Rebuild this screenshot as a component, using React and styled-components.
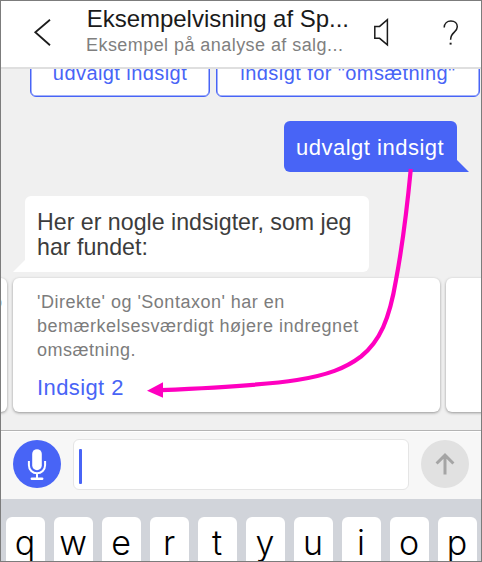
import React from "react";
import styled, { createGlobalStyle } from "styled-components";

const BLUE = "#4864f6";

const GlobalStyle = createGlobalStyle`
  *, *::before, *::after { box-sizing: border-box; }
  body { margin: 0; font-family: "Liberation Sans", Arial, sans-serif; }
`;

const Phone = styled.div`
  position: relative;
  width: 482px;
  height: 562px;
  display: flex;
  flex-direction: column;
  overflow: hidden;
  background: #f0f0f0;
  border: 1px solid #7c7c7c;
`;

const Header = styled.header`
  flex: none;
  height: 68px;
  display: flex;
  align-items: flex-start;
  background: #fff;
  border-bottom: 2px solid #dfdfdf;
`;

const HeaderIcon = styled.svg`
  flex: none;
  display: block;
  width: ${(p) => p.$width}px;
  height: 66px;
  fill: none;
  stroke: #1c1c1c;
`;

const Titles = styled.div`
  width: 286px;
  padding-top: 5px;
  white-space: nowrap;
`;

const Title = styled.h1`
  margin: 0;
  padding-left: 0.7px;
  font-size: 24px;
  font-weight: 400;
  line-height: 26px;
  letter-spacing: -0.02px;
  color: #1a1a1a;
`;

const Subtitle = styled.p`
  margin: 0;
  font-size: 18px;
  line-height: 26px;
  letter-spacing: 0.44px;
  color: #7f7f7f;
`;

const Chat = styled.main`
  flex: none;
  height: 361px;
  display: flex;
  flex-direction: column;
  overflow: hidden;
`;

const Chips = styled.div`
  flex: none;
  display: flex;
  gap: 6px;
  height: 48px;
  margin: -20px 0 0 29px;
`;

const Chip = styled.button`
  flex: none;
  width: ${(p) => p.$width}px;
  padding: 0;
  border: 1px solid ${BLUE};
  border-radius: 6px;
  background: #fff;
  box-shadow: inset 0 0 0 0.5px ${BLUE};
  color: ${BLUE};
  font: 20px/24px "Liberation Sans", Arial, sans-serif;
  letter-spacing: 0.43px;
  white-space: nowrap;
`;

const Sent = styled.div`
  position: relative;
  align-self: flex-end;
  flex: none;
  width: 173px;
  height: 51px;
  margin: 24px 24px 0 0;
  padding: 14px 0 0 12px;
  border-radius: 6px 6px 0 6px;
  background: ${BLUE};
  color: #fff;
  font-size: 22px;
  line-height: 25px;
  letter-spacing: 0.5px;
  white-space: nowrap;
`;

const Received = styled.div`
  position: relative;
  flex: none;
  width: 344px;
  height: 76px;
  margin: 24px 0 0 24px;
  padding: 14px 0 0 12px;
  border-radius: 6px 6px 6px 0;
  background: #fff;
  color: #3c3c3c;
  font-size: 23.2px;
  line-height: 25px;
  white-space: nowrap;
`;

const Tail = styled.svg`
  position: absolute;
  bottom: 0;
  ${(p) => p.$side}: -12px;
  width: 12px;
  height: 12px;
`;

const Cards = styled.div`
  flex: none;
  display: flex;
  gap: 6px;
  margin: 6px 0 0 -40px;
`;

const Card = styled.article`
  flex: none;
  width: ${(p) => p.$width}px;
  height: 134px;
  padding: 12px 0 0 ${(p) => p.$inset ?? 24}px;
  overflow: hidden;
  border-radius: 6px;
  background: #fff;
  box-shadow: 0 1px 3px rgba(0, 0, 0, 0.38);
  color: #7c7c7c;
  font-size: 18px;
  line-height: 24px;
  letter-spacing: 0.5px;
  white-space: nowrap;
`;

const CardText = styled.p`
  margin: 0;
`;

const CardLink = styled.a`
  display: block;
  margin-top: 13px;
  color: ${BLUE};
  font-size: 22px;
  line-height: 25px;
  letter-spacing: 0.4px;
`;

const Composer = styled.section`
  flex: none;
  display: flex;
  align-items: center;
  gap: 12px;
  height: 69px;
  padding: 0 12px 2px;
  border-top: 1px solid #b4b4b4;
  background: #f7f7f7;
  box-shadow: inset 0 1px #fff;
`;

const RoundButton = styled.button`
  flex: none;
  width: 48px;
  height: 48px;
  padding: 0;
  border: 0;
  border-radius: 50%;
  background: ${(p) => (p.$active ? BLUE : "#e1e1e1")};
`;

const ButtonIcon = styled.svg`
  display: block;
  width: 48px;
  height: 48px;
  fill: none;
  stroke: ${(p) => p.$color};
`;

const Input = styled.div`
  flex: none;
  width: 336px;
  height: 51px;
  display: flex;
  align-items: center;
  padding-left: 5px;
  border: 1px solid #e5e5e5;
  border-radius: 6px;
  background: #fff;
`;

const Caret = styled.span`
  width: 3px;
  height: 35px;
  margin-top: 4px;
  border-radius: 1px;
  background: ${BLUE};
`;

const Keyboard = styled.div`
  flex: 1;
  display: flex;
  gap: 9px;
  min-height: 0;
  padding: 18px 0 0 4.5px;
  overflow: hidden;
  background: #d1d4da;
`;

const Key = styled.div`
  flex: none;
  width: 39px;
  height: 62px;
  border-radius: 6px;
  background: #fff;
  color: #000;
  font: 350 34px/52px Inter, sans-serif;
  text-align: center;
`;

const Arrow = styled.svg`
  position: absolute;
  left: -1px;
  top: -1px;
  width: 482px;
  height: 562px;
  pointer-events: none;
`;

export default function App() {
  return (
    <>
      <GlobalStyle />
      <Phone>
        <Header>
          <HeaderIcon $width={85} viewBox="0 0 85 66" strokeWidth="1.8">
            <path d="M49 18.8 34.3 31.3 49 44.2" />
          </HeaderIcon>
          <Titles>
            <Title>Eksempelvisning af Sp...</Title>
            <Subtitle>Eksempel på analyse af salg...</Subtitle>
          </Titles>
          <HeaderIcon $width={40} viewBox="0 0 40 66" strokeWidth="1.5">
            <path d="M2.8 25.4H7.6L15.4 18.7V43.8L7.6 37.3H2.8Z" />
          </HeaderIcon>
          <HeaderIcon $width={69} viewBox="0 0 69 66" strokeWidth="1.5">
            <path d="M32.2 26.5C32.3 22.4 35.2 20 38.9 20C42.7 20 45.3 22.5 45.3 25.8C45.3 31.5 38.6 31 38.6 38.7" />
            <path d="M38.6 41.7V43.6" strokeWidth="2" />
          </HeaderIcon>
        </Header>

        <Chat>
          <Chips>
            <Chip $width={180}>udvalgt indsigt</Chip>
            <Chip $width={264}>indsigt for "omsætning"</Chip>
          </Chips>

          <Sent>
            udvalgt indsigt
            <Tail $side="right" viewBox="0 0 12 12">
              <path d="M0 0 12 12H0Z" fill={BLUE} />
            </Tail>
          </Sent>

          <Received>
            Her er nogle indsigter, som jeg
            <br />
            har fundet:
            <Tail $side="left" viewBox="0 0 12 12">
              <path d="M12 0V12H0Z" fill="#fff" />
            </Tail>
          </Received>

          <Cards>
            <Card $width={46} $inset={31}>
              <CardText>o</CardText>
            </Card>
            <Card $width={427}>
              <CardText>
                'Direkte' og 'Sontaxon' har en
                <br />
                bemærkelsesværdigt højere indregnet
                <br />
                omsætning.
              </CardText>
              <CardLink>Indsigt 2</CardLink>
            </Card>
            <Card $width={80} />
          </Cards>
        </Chat>

        <Composer>
          <RoundButton $active aria-label="Mikrofon">
            <ButtonIcon $color="#fff" viewBox="0 0 48 48">
              <rect x="19.2" y="9.2" width="9.6" height="21" rx="4.8" fill="#fff" stroke="none" />
              <path d="M15.9 21V25.2A8.1 8.1 0 0 0 32.1 25.2V21M24 33.3V38.5" strokeWidth="2" />
              <path d="M18.8 38.7H29.2" strokeWidth="2.4" strokeLinecap="round" />
            </ButtonIcon>
          </RoundButton>
          <Input>
            <Caret />
          </Input>
          <RoundButton aria-label="Send">
            <ButtonIcon $color="#a5a5a5" viewBox="0 0 48 48">
              <path d="M24 34.5V15.5M15.6 23.5 24 15.2 32.4 23.5" strokeWidth="3" />
            </ButtonIcon>
          </RoundButton>
        </Composer>

        <Keyboard>
          {"qwertyuiop".split("").map((letter) => (
            <Key key={letter}>{letter}</Key>
          ))}
        </Keyboard>

        <Arrow viewBox="0 0 482 562">
          <path
            d="M410.8 169C406.5 214 402 248 396 280C389.5 319 380 341 361 356.5C330 380 288 384.5 161 390.2"
            fill="none"
            stroke="#ff00c0"
            strokeWidth="4.2"
          />
          <path d="M147 390.7 163 382.3V397.8Z" fill="#ff00c0" />
        </Arrow>
      </Phone>
    </>
  );
}
